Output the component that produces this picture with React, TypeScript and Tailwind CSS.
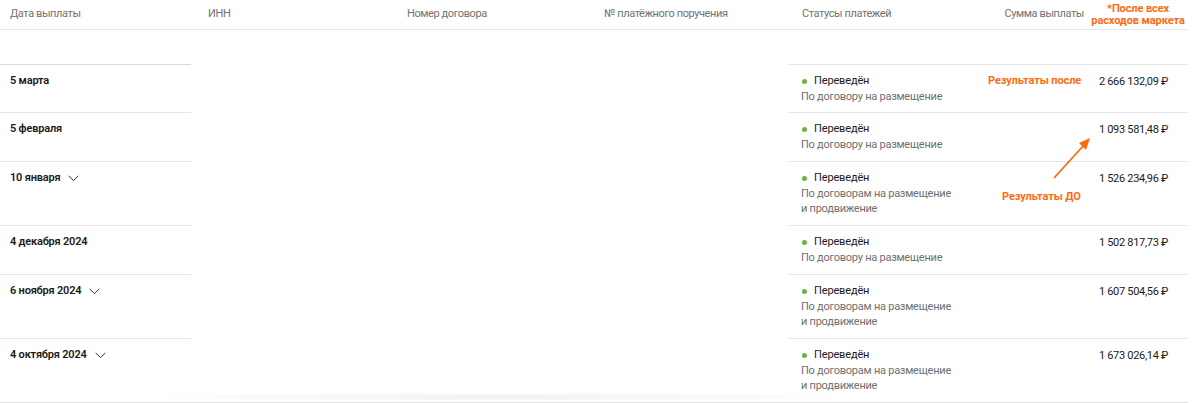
import React from "react";

type Row = {
  date: string;
  chevron?: boolean;
  lines: string[];
  amount: string;
};

const rows: Row[] = [
  { date: "5 марта", lines: ["По договору на размещение"], amount: "2 666 132,09 ₽" },
  { date: "5 февраля", lines: ["По договору на размещение"], amount: "1 093 581,48 ₽" },
  { date: "10 января", chevron: true, lines: ["По договорам на размещение", "и продвижение"], amount: "1 526 234,96 ₽" },
  { date: "4 декабря 2024", lines: ["По договору на размещение"], amount: "1 502 817,73 ₽" },
  { date: "6 ноября 2024", chevron: true, lines: ["По договорам на размещение", "и продвижение"], amount: "1 607 504,56 ₽" },
  { date: "4 октября 2024", chevron: true, lines: ["По договорам на размещение", "и продвижение"], amount: "1 673 026,14 ₽" },
];

function Chevron() {
  return (
    <svg width="11" height="7" viewBox="0 0 11 7" className="ml-[8px]">
      <path d="M1 1.2 L5.5 5.5 L10 1.2" fill="none" stroke="#333" strokeWidth="1" strokeLinecap="round" strokeLinejoin="round" />
    </svg>
  );
}

export default function App() {
  const font = { fontFamily: "Roboto, 'Noto Sans', sans-serif" };
  return (
    <div className="relative w-[1200px] h-[403px] bg-white overflow-hidden text-[#1f1f1f]" style={font}>
      <div className="w-[1188px]">
        {/* header */}
        <div className="flex h-[30px] border-b border-[#e6e6e6] text-[11px] tracking-[-0.4px] text-[#727272] whitespace-nowrap">
          <div className="w-[198px] pl-[10px] pt-[6px]">Дата выплаты</div>
          <div className="w-[199px] pl-[10px] pt-[6px]">ИНН</div>
          <div className="w-[197px] pl-[10px] pt-[6px]">Номер договора</div>
          <div className="w-[198px] pl-[10px] pt-[6px]">№ платёжного поручения</div>
          <div className="w-[200px] pl-[10px] pt-[6px]">Статусы платежей</div>
          <div className="flex-1 flex justify-end pt-[6px] pr-[4px]">Сумма выплаты</div>
          <div className="w-[100px] pt-[3px] text-center text-[11px] tracking-[-0.1px] leading-[12px] font-bold text-[#ff6a10]">
            *После всех
            <br />
            расходов маркета
          </div>
        </div>
        <div className="h-[34px]" />
        {rows.map((r, i) => (
          <div key={i} className="flex">
            <div className={`w-[191px] border-t ${i === 0 ? "border-[#d9d9d9] pb-[8px]" : "border-[#e6e6e6] pb-[9px]"} pl-[10px] pt-[9px]`}>
              <div className="flex items-center h-[15px] text-[11px] tracking-[-0.2px] font-semibold text-[#1a1a1a] whitespace-nowrap">
                {r.date}
                {r.chevron && <Chevron />}
              </div>
            </div>
            <div className="w-[597px]" />
            <div className={`flex-1 flex border-t border-[#e6e6e6] pt-[9px] ${i === 0 ? "pb-[8px]" : "pb-[9px]"}`}>
              <div className="w-[200px] pl-[14px]">
                <div className="flex items-center h-[15px] text-[11px] tracking-[-0.15px] text-[#1a1a1a]">
                  <span className="w-[5px] h-[5px] rounded-full bg-[#6db33f] mr-[7px]" />
                  Переведён
                </div>
                {r.lines.map((l, j) => (
                  <div key={j} className="-ml-[1px] h-[15px] leading-[15px] text-[11px] tracking-[-0.25px] text-[#6f6f6f] whitespace-nowrap">
                    {l}
                  </div>
                ))}
              </div>
              <div className="flex-1 flex justify-end pr-[20px]">
                <div className="h-[15px] leading-[15px] text-[11px] tracking-[-0.3px] text-[#1a1a1a] whitespace-nowrap">{r.amount}</div>
              </div>
            </div>
          </div>
        ))}
        <div className="border-t border-[#e0e0e0]" />
      </div>

      {/* annotations */}
      <div className="absolute left-[988px] top-[73px] text-[11px] tracking-[-0.1px] font-bold text-[#ff6a10] whitespace-nowrap">
        Результаты после
      </div>
      <div className="absolute left-[1002px] top-[189px] text-[11px] tracking-[-0.1px] font-bold text-[#ff6a10] whitespace-nowrap">
        Результаты ДО
      </div>
      <svg className="absolute left-0 top-0 pointer-events-none" width="1200" height="403">
        <line x1="1054" y1="178" x2="1084" y2="145" stroke="#ff6a10" strokeWidth="1.8" />
        <polygon points="1090,138 1079,143 1086,150" fill="#ff6a10" />
      </svg>
      <div className="absolute left-[120px] top-[392px] w-[760px] h-[10px] rounded-full bg-[radial-gradient(ellipse_at_center,rgba(0,0,0,0.06),rgba(0,0,0,0)_70%)]" />
    </div>
  );
}
